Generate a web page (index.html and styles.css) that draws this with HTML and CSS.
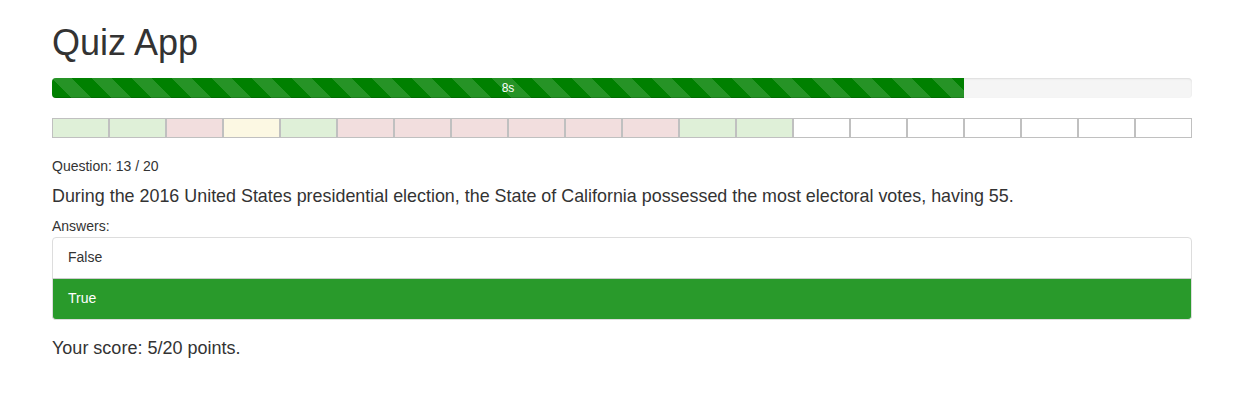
FILE: index.html
```html
<!DOCTYPE html>
<html lang="en">
<head>
<meta charset="utf-8">
<title>Quiz App</title>
<link rel="stylesheet" href="styles.css">
</head>
<body>
<div class="container">
  <h1 class="title">Quiz App</h1>
  <div class="progress">
    <div class="progress-bar" style="width: 80%">8s</div>
  </div>
  <div class="tracker">
    <div class="cell ok"></div>
    <div class="cell ok"></div>
    <div class="cell bad"></div>
    <div class="cell skip"></div>
    <div class="cell ok"></div>
    <div class="cell bad"></div>
    <div class="cell bad"></div>
    <div class="cell bad"></div>
    <div class="cell bad"></div>
    <div class="cell bad"></div>
    <div class="cell bad"></div>
    <div class="cell ok"></div>
    <div class="cell ok"></div>
    <div class="cell"></div>
    <div class="cell"></div>
    <div class="cell"></div>
    <div class="cell"></div>
    <div class="cell"></div>
    <div class="cell"></div>
    <div class="cell"></div>
  </div>
  <div class="q-count">Question: 13 / 20</div>
  <p class="q-text">During the 2016 United States presidential election, the State of California possessed the most electoral votes, having 55.</p>
  <div class="answers-label">Answers:</div>
  <div class="list-group">
    <div class="list-item">False</div>
    <div class="list-item active">True</div>
  </div>
  <p class="score">Your score: 5/20 points.</p>
</div>
</body>
</html>
```
FILE: styles.css
```css
* { box-sizing: border-box; }
html, body { margin: 0; padding: 0; }
body {
  font-family: "Liberation Sans", Arial, Helvetica, sans-serif;
  font-size: 14px;
  line-height: 20px;
  color: #333;
  background: #fff;
}
.container {
  width: 1140px;
  margin-left: 52px;
}
.title {
  font-size: 36px;
  font-weight: 500;
  line-height: 40px;
  margin: 23px 0 15px;
}
.progress {
  height: 20px;
  margin-bottom: 20px;
  background: #f5f5f5;
  border-radius: 4px;
  overflow: hidden;
  box-shadow: inset 0 1px 2px rgba(0,0,0,.1);
  display: flex;
}
.progress-bar {
  height: 100%;
  background-color: #008000;
  background-image: linear-gradient(45deg, rgba(255,255,255,.15) 25%, transparent 25%, transparent 50%, rgba(255,255,255,.15) 50%, rgba(255,255,255,.15) 75%, transparent 75%, transparent);
  background-size: 40px 40px;
  color: #fff;
  font-size: 12px;
  line-height: 20px;
  text-align: center;
  box-shadow: inset 0 -1px 0 rgba(0,0,0,.15);
}
.tracker {
  display: grid;
  grid-template-columns: repeat(20, 57px);
  height: 20px;
}
.cell {
  border: 1px solid #c0c0c0;
  background: #fff;
}
.cell.ok { background: #dff0d8; }
.cell.bad { background: #f2dede; }
.cell.skip { background: #fcf8e3; }
.q-count {
  margin-top: 18px;
}
.q-text {
  font-size: 17.9px;
  line-height: 26px;
  margin: 7px 0 0;
}
.answers-label {
  margin-top: 7px;
}
.list-group {
  margin-top: 1px;
  display: flex;
  flex-direction: column;
}
.list-item {
  padding: 9px 15px 11px;
  border: 1px solid #ddd;
  margin-bottom: -1px;
  background: #fff;
  color: #333;
}
.list-item:first-child {
  border-top-left-radius: 4px;
  border-top-right-radius: 4px;
}
.list-item:last-child {
  margin-bottom: 0;
  border-bottom-left-radius: 4px;
  border-bottom-right-radius: 4px;
}
.list-item.active {
  background: #299a2b;
  color: #fff;
  border-color: #ddd;
  border-top-color: #ccc;
}
.score {
  font-size: 18px;
  line-height: 26px;
  margin: 15px 0 0;
}
```
